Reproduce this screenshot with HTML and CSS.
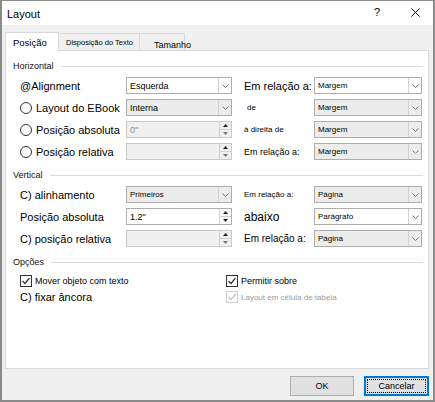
FILE: index.html
```html
<!DOCTYPE html>
<html>
<head>
<meta charset="utf-8">
<title>Layout</title>
<link rel="stylesheet" href="styles.css">
</head>
<body>
<div class="window">
  <div class="titlebar">
    <span class="title">Layout</span>
    <span class="help">?</span>
    <svg class="close" width="10" height="10" viewBox="0 0 10 10"><path d="M0.5 0.5L9.5 9.5M9.5 0.5L0.5 9.5" stroke="#000" stroke-width="1.1" fill="none"/></svg>
  </div>
  <div class="main">
    <div class="tabs">
      <div class="tab active">Posição</div>
      <div class="tab t2">Disposição do Texto</div>
      <div class="tab t3">Tamanho</div>
    </div>
    <div class="panel">
      <div class="group-head first"><span>Horizontal</span><i class="rule"></i></div>
      <div class="grid">
        <div class="lbl big">@Alignment</div>
        <div class="combo white"><span class="val v9">Esquerda</span><span class="drop"><svg width="7" height="4" viewBox="0 0 7 4"><path d="M0.5 0.5L3.5 3.5L6.5 0.5" stroke="#777" fill="none"/></svg></span></div>
        <div class="rlbl big">Em relação a:</div>
        <div class="combo white"><span class="val v8">Margem</span><span class="drop"><svg width="7" height="4" viewBox="0 0 7 4"><path d="M0.5 0.5L3.5 3.5L6.5 0.5" stroke="#777" fill="none"/></svg></span></div>

        <div class="lbl big"><span class="radio"></span>Layout do EBook</div>
        <div class="combo grey"><span class="val v9">Interna</span><span class="drop"><svg width="7" height="4" viewBox="0 0 7 4"><path d="M0.5 0.5L3.5 3.5L6.5 0.5" stroke="#777" fill="none"/></svg></span></div>
        <div class="rlbl tiny pad">de</div>
        <div class="combo grey"><span class="val v8">Margem</span><span class="drop"><svg width="7" height="4" viewBox="0 0 7 4"><path d="M0.5 0.5L3.5 3.5L6.5 0.5" stroke="#777" fill="none"/></svg></span></div>

        <div class="lbl big"><span class="radio"></span>Posição absoluta</div>
        <div class="spin grey"><span class="val v9 dim">0"</span><span class="arrows"><span class="up"><svg width="5" height="3" viewBox="0 0 5 3"><path d="M0 3L2.5 0L5 3Z" fill="#222"/></svg></span><span class="down"><svg width="5" height="3" viewBox="0 0 5 3"><path d="M0 0L2.5 3L5 0Z" fill="#777"/></svg></span></span></div>
        <div class="rlbl tiny">à direita de</div>
        <div class="combo grey"><span class="val v8">Margem</span><span class="drop"><svg width="7" height="4" viewBox="0 0 7 4"><path d="M0.5 0.5L3.5 3.5L6.5 0.5" stroke="#777" fill="none"/></svg></span></div>

        <div class="lbl big"><span class="radio"></span>Posição relativa</div>
        <div class="spin grey"><span class="val v9"></span><span class="arrows"><span class="up"><svg width="5" height="3" viewBox="0 0 5 3"><path d="M0 3L2.5 0L5 3Z" fill="#222"/></svg></span><span class="down"><svg width="5" height="3" viewBox="0 0 5 3"><path d="M0 0L2.5 3L5 0Z" fill="#777"/></svg></span></span></div>
        <div class="rlbl small">Em relação a:</div>
        <div class="combo grey"><span class="val v8">Margem</span><span class="drop"><svg width="7" height="4" viewBox="0 0 7 4"><path d="M0.5 0.5L3.5 3.5L6.5 0.5" stroke="#777" fill="none"/></svg></span></div>
      </div>

      <div class="group-head"><span>Vertical</span><i class="rule"></i></div>
      <div class="grid">
        <div class="lbl big">C) alinhamento</div>
        <div class="combo grey"><span class="val v8">Primeiros</span><span class="drop"><svg width="7" height="4" viewBox="0 0 7 4"><path d="M0.5 0.5L3.5 3.5L6.5 0.5" stroke="#777" fill="none"/></svg></span></div>
        <div class="rlbl tinier">Em relação a:</div>
        <div class="combo grey"><span class="val v8">Página</span><span class="drop"><svg width="7" height="4" viewBox="0 0 7 4"><path d="M0.5 0.5L3.5 3.5L6.5 0.5" stroke="#777" fill="none"/></svg></span></div>

        <div class="lbl big">Posição absoluta</div>
        <div class="spin white"><span class="val v9">1.2"</span><span class="arrows"><span class="up"><svg width="5" height="3" viewBox="0 0 5 3"><path d="M0 3L2.5 0L5 3Z" fill="#222"/></svg></span><span class="down"><svg width="5" height="3" viewBox="0 0 5 3"><path d="M0 0L2.5 3L5 0Z" fill="#222"/></svg></span></span></div>
        <div class="rlbl huge">abaixo</div>
        <div class="combo white"><span class="val v8">Parágrafo</span><span class="drop"><svg width="7" height="4" viewBox="0 0 7 4"><path d="M0.5 0.5L3.5 3.5L6.5 0.5" stroke="#777" fill="none"/></svg></span></div>

        <div class="lbl big">C) posição relativa</div>
        <div class="spin grey"><span class="val v9"></span><span class="arrows"><span class="up"><svg width="5" height="3" viewBox="0 0 5 3"><path d="M0 3L2.5 0L5 3Z" fill="#222"/></svg></span><span class="down"><svg width="5" height="3" viewBox="0 0 5 3"><path d="M0 0L2.5 3L5 0Z" fill="#777"/></svg></span></span></div>
        <div class="rlbl mid">Em relação a:</div>
        <div class="combo grey"><span class="val v8">Página</span><span class="drop"><svg width="7" height="4" viewBox="0 0 7 4"><path d="M0.5 0.5L3.5 3.5L6.5 0.5" stroke="#777" fill="none"/></svg></span></div>
      </div>

      <div class="group-head"><span>Opções</span><i class="rule"></i></div>
      <div class="options">
        <div class="opt small"><svg class="check" width="12" height="12" viewBox="0 0 12 12"><rect x="0.5" y="0.5" width="11" height="11" fill="#fff" stroke="#333"/><path d="M2.5 6L5 8.5L9.5 3" stroke="#333" stroke-width="1.2" fill="none"/></svg>Mover objeto com texto</div>
        <div class="opt small"><svg class="check" width="12" height="12" viewBox="0 0 12 12"><rect x="0.5" y="0.5" width="11" height="11" fill="#fff" stroke="#333"/><path d="M2.5 6L5 8.5L9.5 3" stroke="#333" stroke-width="1.2" fill="none"/></svg>Permitir sobre</div>
        <div class="opt big">C) fixar âncora</div>
        <div class="opt tinier disabled"><svg class="check" width="12" height="12" viewBox="0 0 12 12"><rect x="0.5" y="0.5" width="11" height="11" fill="#fff" stroke="#cfcfcf"/><path d="M2.5 6L5 8.5L9.5 3" stroke="#c4c4c4" stroke-width="1.2" fill="none"/></svg>Layout em célula de tabela</div>
      </div>
    </div>
    <div class="footer">
      <button class="btn">OK</button>
      <button class="btn default"><span class="focus">Cancelar</span></button>
    </div>
  </div>
</div>
</body>
</html>
```
FILE: styles.css
```css
* { box-sizing: border-box; margin: 0; padding: 0; }
html, body { width: 435px; height: 402px; overflow: hidden; }
body { font-family: "Liberation Sans", Arial, sans-serif; color: #000; background: #fff; }

.window {
  width: 435px; height: 402px;
  border: solid #8a8a8a; border-width: 1px 2px 2px 2px;
  display: flex; flex-direction: column;
  background: #f0f0f0;
}

.titlebar {
  height: 24px; flex: none; background: #fff;
  display: flex; align-items: flex-start;
  padding: 7px 13px 0 5px;
}
.title { flex: 1; font-size: 11px; line-height: 13px; }
.help { width: 6px; margin-right: 31px; font-size: 11px; line-height: 13px; margin-top: -2px; }
.close { width: 9px; height: 9px; margin-top: 0; }

.main { flex: 1; display: flex; flex-direction: column; padding: 7px 4px 0 3px; }

.tabs { height: 18px; flex: none; display: flex; align-items: flex-end; }
.tab {
  border: 1px solid #d9d9d9; border-bottom: none;
  white-space: nowrap; background: #f0f0f0;
}
.tab.active {
  position: relative; z-index: 1;
  width: 54px; height: 19px; margin-bottom: -1px;
  background: #fff; font-size: 9.5px; line-height: 11px;
  padding: 4px 0 0 7px;
}
.tab.t2 {
  width: 81px; height: 17px; border-left: none;
  font-size: 7.5px; line-height: 9px; padding: 4px 0 0 7px;
}
.tab.t3 {
  width: 45px; height: 17px; border-left: none;
  font-size: 9px; line-height: 11px; padding: 6px 0 0 14px;
}

.panel {
  flex: 1; background: #fff; border: 1px solid #d9d9d9;
  padding: 10px 5px 0 7px;
}

.group-head {
  height: 10px; display: flex; align-items: center; gap: 7px;
  font-size: 9px; line-height: 10px; color: #111;
  margin-top: 10px; margin-bottom: 6px;
}
.group-head.first { margin-top: 0; }
.rule { flex: 1; height: 1px; background: #dadada; }

.grid {
  margin-left: 7px;
  display: grid;
  grid-template-columns: 106px 106px 82px 108px;
  grid-auto-rows: 17px;
  row-gap: 5px;
}
.lbl { display: flex; align-items: center; white-space: nowrap; }
.rlbl { display: flex; align-items: center; padding-left: 12px; white-space: nowrap; }
.rlbl.pad { padding-left: 15px; }
.big { font-size: 11px; }
.huge { font-size: 12px; }
.mid { font-size: 10px; }
.small { font-size: 9px; }
.tiny { font-size: 8px; }
.tinier { font-size: 8px; }

.radio {
  width: 12px; height: 12px; border: 1px solid #333; border-radius: 50%;
  background: #fff; margin-right: 4px; flex: none;
}

.combo, .spin {
  display: flex; align-items: stretch;
  border: 1px solid #adadad; height: 17px;
}
.white { background: #fff; }
.grey { background: #ececec; }
.spin.grey { background: #f0f0f0; border-color: #c9c9c9; }
.val { flex: 1; padding-left: 3px; display: flex; align-items: center; white-space: nowrap; }
.v9 { font-size: 9px; }
.v8 { font-size: 8px; }
.dim { color: #8a8a8a; }
.drop {
  width: 13px; border-left: 1px solid #d2d2d2;
  display: flex; align-items: center; justify-content: center;
}
.arrows { width: 12px; display: flex; flex-direction: column; border-left: 1px solid #d2d2d2; }
.arrows span { flex: 1; display: flex; align-items: center; justify-content: center; }
.arrows .up { border-bottom: 1px solid #d2d2d2; }

.options {
  margin-left: 7px;
  display: grid;
  grid-template-columns: 206px 1fr;
  grid-auto-rows: 16px;
}
.opt { display: flex; align-items: center; white-space: nowrap; }
.check { flex: none; margin-right: 3px; }
.disabled { color: #9a9a9a; }

.footer {
  height: 31px; flex: none;
  display: flex; justify-content: flex-end; align-items: flex-start;
  gap: 10px; padding-top: 7px;
}
.btn {
  width: 64px; height: 20px; background: #e1e1e1;
  border: 1px solid #adadad; font-family: inherit; font-size: 9px; color: #000;
  display: flex; align-items: center; justify-content: center;
}
.btn.default { width: 65px; border: 2px solid #0078d7; padding: 1px; }
.focus {
  width: 100%; height: 100%; border: 1px dotted #000;
  display: flex; align-items: center; justify-content: center;
}
```
